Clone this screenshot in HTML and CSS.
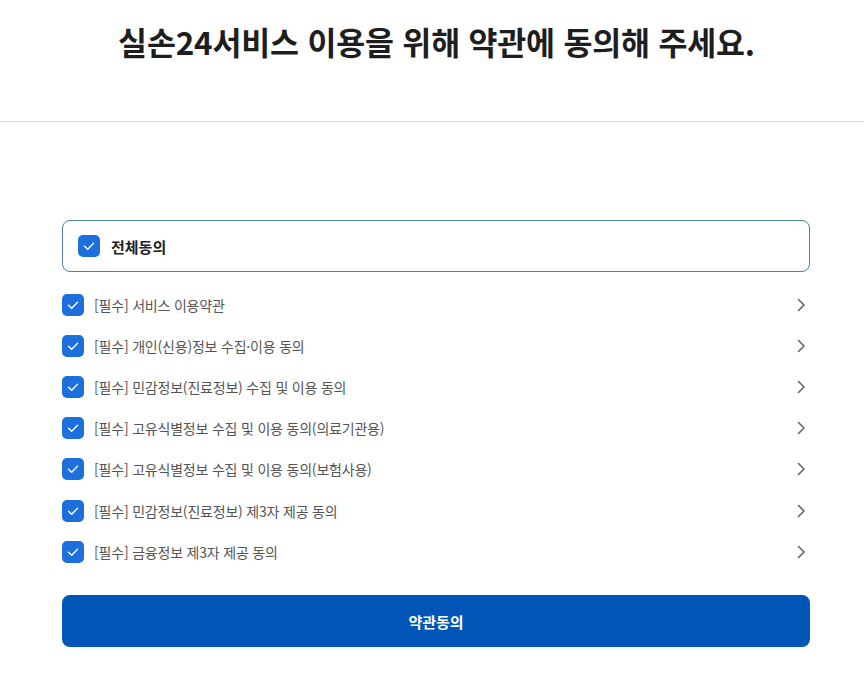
FILE: index.html
```html
<!DOCTYPE html>
<html lang="ko">
<head>
<meta charset="utf-8">
<title>약관동의</title>
<link rel="stylesheet" href="styles.css">
</head>
<body>
<header class="page-header">
  <h1 class="title">실손24서비스 이용을 위해 약관에 동의해 주세요.</h1>
</header>
<main class="content">
  <div class="all-agree">
    <span class="check"><svg viewBox="0 0 22 22" width="22" height="22"><path d="M6.5 11.2l3.2 3.1 5.8-6" fill="none" stroke="#fff" stroke-width="1.4" stroke-linecap="round" stroke-linejoin="round"/></svg></span>
    <span class="all-label">전체동의</span>
  </div>
  <ul class="terms">
    <li class="term"><span class="check"><svg viewBox="0 0 22 22" width="22" height="22"><path d="M6.5 11.2l3.2 3.1 5.8-6" fill="none" stroke="#fff" stroke-width="1.4" stroke-linecap="round" stroke-linejoin="round"/></svg></span><span class="term-label">[필수] 서비스 이용약관</span><svg class="chev" viewBox="0 0 10 16" width="10" height="16"><path d="M2.5 2.5l5.5 5.5-5.5 5.5" fill="none" stroke="#666" stroke-width="1.6" stroke-linecap="round" stroke-linejoin="round"/></svg></li>
    <li class="term"><span class="check"><svg viewBox="0 0 22 22" width="22" height="22"><path d="M6.5 11.2l3.2 3.1 5.8-6" fill="none" stroke="#fff" stroke-width="1.4" stroke-linecap="round" stroke-linejoin="round"/></svg></span><span class="term-label">[필수] 개인(신용)정보 수집·이용 동의</span><svg class="chev" viewBox="0 0 10 16" width="10" height="16"><path d="M2.5 2.5l5.5 5.5-5.5 5.5" fill="none" stroke="#666" stroke-width="1.6" stroke-linecap="round" stroke-linejoin="round"/></svg></li>
    <li class="term"><span class="check"><svg viewBox="0 0 22 22" width="22" height="22"><path d="M6.5 11.2l3.2 3.1 5.8-6" fill="none" stroke="#fff" stroke-width="1.4" stroke-linecap="round" stroke-linejoin="round"/></svg></span><span class="term-label">[필수] 민감정보(진료정보) 수집 및 이용 동의</span><svg class="chev" viewBox="0 0 10 16" width="10" height="16"><path d="M2.5 2.5l5.5 5.5-5.5 5.5" fill="none" stroke="#666" stroke-width="1.6" stroke-linecap="round" stroke-linejoin="round"/></svg></li>
    <li class="term"><span class="check"><svg viewBox="0 0 22 22" width="22" height="22"><path d="M6.5 11.2l3.2 3.1 5.8-6" fill="none" stroke="#fff" stroke-width="1.4" stroke-linecap="round" stroke-linejoin="round"/></svg></span><span class="term-label">[필수] 고유식별정보 수집 및 이용 동의(의료기관용)</span><svg class="chev" viewBox="0 0 10 16" width="10" height="16"><path d="M2.5 2.5l5.5 5.5-5.5 5.5" fill="none" stroke="#666" stroke-width="1.6" stroke-linecap="round" stroke-linejoin="round"/></svg></li>
    <li class="term"><span class="check"><svg viewBox="0 0 22 22" width="22" height="22"><path d="M6.5 11.2l3.2 3.1 5.8-6" fill="none" stroke="#fff" stroke-width="1.4" stroke-linecap="round" stroke-linejoin="round"/></svg></span><span class="term-label">[필수] 고유식별정보 수집 및 이용 동의(보험사용)</span><svg class="chev" viewBox="0 0 10 16" width="10" height="16"><path d="M2.5 2.5l5.5 5.5-5.5 5.5" fill="none" stroke="#666" stroke-width="1.6" stroke-linecap="round" stroke-linejoin="round"/></svg></li>
    <li class="term"><span class="check"><svg viewBox="0 0 22 22" width="22" height="22"><path d="M6.5 11.2l3.2 3.1 5.8-6" fill="none" stroke="#fff" stroke-width="1.4" stroke-linecap="round" stroke-linejoin="round"/></svg></span><span class="term-label">[필수] 민감정보(진료정보) 제3자 제공 동의</span><svg class="chev" viewBox="0 0 10 16" width="10" height="16"><path d="M2.5 2.5l5.5 5.5-5.5 5.5" fill="none" stroke="#666" stroke-width="1.6" stroke-linecap="round" stroke-linejoin="round"/></svg></li>
    <li class="term"><span class="check"><svg viewBox="0 0 22 22" width="22" height="22"><path d="M6.5 11.2l3.2 3.1 5.8-6" fill="none" stroke="#fff" stroke-width="1.4" stroke-linecap="round" stroke-linejoin="round"/></svg></span><span class="term-label">[필수] 금융정보 제3자 제공 동의</span><svg class="chev" viewBox="0 0 10 16" width="10" height="16"><path d="M2.5 2.5l5.5 5.5-5.5 5.5" fill="none" stroke="#666" stroke-width="1.6" stroke-linecap="round" stroke-linejoin="round"/></svg></li>
  </ul>
  <button class="submit" type="button">약관동의</button>
</main>
</body>
</html>
```

FILE: styles.css
```css
* { box-sizing: border-box; }
html, body { margin: 0; padding: 0; background: #fff; }
body {
  font-family: "Noto Sans CJK KR", "Noto Sans", sans-serif;
  color: #222;
}
.page-header {
  height: 122px;
  border-bottom: 1px solid #dedede;
  padding-left: 9px;
  padding-top: 18px;
}
.title {
  margin: 0;
  text-align: center;
  font-size: 31.5px;
  line-height: 46px;
  font-weight: 700;
  color: #1e1e1e;
  letter-spacing: -0.2px;
}
.content {
  width: 748px;
  margin-left: 62px;
  padding-top: 98px;
}
.all-agree {
  height: 52px;
  border: 1px solid #4f7fa0;
  border-radius: 8px;
  display: flex;
  align-items: center;
  padding-left: 15px;
  gap: 11px;
}
.check {
  width: 22px;
  height: 22px;
  border-radius: 5px;
  background: #1c6fdc;
  display: inline-flex;
  flex: none;
}
.all-label {
  font-size: 15px;
  font-weight: 700;
  color: #222;
}
.terms {
  list-style: none;
  margin: 12px 0 0;
  padding: 0;
}
.term {
  height: 41.2px;
  display: flex;
  align-items: center;
  gap: 10px;
}
.term-label {
  flex: 1;
  font-size: 14px;
  color: #555;
  letter-spacing: -0.2px;
}
.chev {
  flex: none;
  margin-right: 4px;
}
.submit {
  display: block;
  width: 100%;
  height: 52px;
  margin-top: 23px;
  border: 0;
  border-radius: 8px;
  background: #0055b7;
  color: #fff;
  font-family: "Noto Sans CJK KR", sans-serif;
  font-size: 15px;
  font-weight: 700;
}
```
